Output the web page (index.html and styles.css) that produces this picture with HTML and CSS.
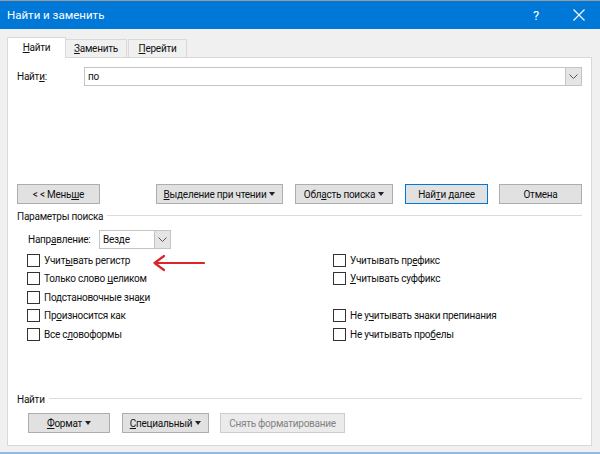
FILE: index.html
```html
<!DOCTYPE html>
<html lang="ru">
<head>
<meta charset="utf-8">
<title>Найти и заменить</title>
<link rel="stylesheet" href="styles.css">
</head>
<body>
<div class="window">
  <div class="titlebar">
    <span class="title">Найти и заменить</span>
    <span class="tb-btn help">?</span>
    <span class="tb-btn close">
      <svg width="12" height="12" viewBox="0 0 12 12"><path d="M0.5 0.5 L11.5 11.5 M11.5 0.5 L0.5 11.5" stroke="#fff" stroke-width="1.1" fill="none"/></svg>
    </span>
  </div>
  <div class="tabs">
    <div class="tab active"><span><u>Н</u>айти</span></div>
    <div class="tab"><span><u>З</u>аменить</span></div>
    <div class="tab"><span><u>П</u>ерейти</span></div>
  </div>
  <div class="panel">
    <div class="find-row">
      <label class="find-label">Найт<u>и</u>:</label>
      <div class="combo">
        <span class="combo-text">по</span>
        <span class="combo-btn"><svg width="9" height="5" viewBox="0 0 9 5"><path d="M0.5 0.5 L4.5 4.5 L8.5 0.5" stroke="#555" fill="none"/></svg></span>
      </div>
    </div>
    <div class="btn-row">
      <button class="btn w83"><span>&lt; &lt; Мень<u>ш</u>е</span></button>
      <div class="btn-group">
        <button class="btn w127"><span><u>В</u>ыделение при чтении</span><i class="caret"></i></button>
        <button class="btn w98"><span>Обл<u>а</u>сть поиска</span><i class="caret"></i></button>
        <button class="btn w83 default"><span>Най<u>т</u>и далее</span></button>
        <button class="btn w83"><span>Отмена</span></button>
      </div>
    </div>
    <div class="group-head"><span>Параметры поиска</span><i class="rule"></i></div>
    <div class="dir-row">
      <span class="dir-label">Напр<u>а</u>вление:</span>
      <div class="select">
        <span class="combo-text">Везде</span>
        <span class="combo-btn"><svg width="9" height="5" viewBox="0 0 9 5"><path d="M0.5 0.5 L4.5 4.5 L8.5 0.5" stroke="#555" fill="none"/></svg></span>
      </div>
    </div>
    <div class="options">
      <div class="opt"><i class="cb"></i><span>Учит<u>ы</u>вать регистр</span></div>
      <div class="opt"><i class="cb"></i><span>Учитывать пр<u>е</u>фикс</span></div>
      <div class="opt"><i class="cb"></i><span>Только слово <u>ц</u>еликом</span></div>
      <div class="opt"><i class="cb"></i><span><u>У</u>читывать суффикс</span></div>
      <div class="opt"><i class="cb"></i><span>Подстановочные зна<u>к</u>и</span></div>
      <div class="opt"></div>
      <div class="opt"><i class="cb"></i><span>Пр<u>о</u>износится как</span></div>
      <div class="opt"><i class="cb"></i><span>Не у<u>ч</u>итывать знаки препинания</span></div>
      <div class="opt"><i class="cb"></i><span>Все с<u>л</u>овоформы</span></div>
      <div class="opt"><i class="cb"></i><span>Не учитывать про<u>б</u>елы</span></div>
    </div>
    <div class="spacer"></div>
    <div class="group-head bottom"><span>Найти</span><i class="rule"></i></div>
    <div class="bottom-row">
      <button class="btn w82"><span><u>Ф</u>ормат</span><i class="caret"></i></button>
      <button class="btn w87"><span><u>С</u>пециальный</span><i class="caret"></i></button>
      <button class="btn w125 disabled"><span>Снять форматирование</span></button>
    </div>
    <svg class="annot-arrow" width="54" height="18" viewBox="0 0 54 18">
      <path d="M52 9 L3 9 M12 2 L2.5 9 L12 16" stroke="#d9252b" stroke-width="2.2" fill="none" stroke-linecap="round" stroke-linejoin="round"/>
    </svg>
  </div>
  <div class="bottom-edge"></div>
</div>
</body>
</html>
```

FILE: styles.css
```css
* { box-sizing: border-box; }
html, body { margin: 0; padding: 0; }
body {
  width: 600px;
  height: 454px;
  overflow: hidden;
  background: #f0f0f0;
  font-family: Roboto, "Noto Sans", sans-serif;
  font-size: 10px;
  letter-spacing: -0.25px;
  color: #111;
}
u { text-decoration: underline; text-underline-offset: 1px; }
.window { width: 600px; height: 454px; display: flex; flex-direction: column; }
.titlebar {
  height: 29px;
  border-top: 1px solid #9a9a9a;
  background: #0078d7;
  color: #fff;
  display: flex;
  align-items: center;
  padding-left: 7px;
}
.title { font-size: 11.5px; flex: 1; letter-spacing: 0; }
.tb-btn { display: flex; align-items: center; justify-content: center; }
.help { width: 14px; margin-right: 29px; font-size: 13px; }
.close { width: 14px; margin-right: 14px; }
.tabs {
  display: flex;
  align-items: flex-end;
  padding-left: 7px;
  margin-top: 7px;
  height: 21px;
  position: relative;
  z-index: 1;
  white-space: nowrap;
}
.tab {
  height: 18px;
  width: 61px;
  background: #f0f0f0;
  border: 1px solid #d9d9d9;
  border-bottom: none;
  display: flex;
  align-items: center;
  justify-content: center;
}
.tab + .tab { border-left: none; }
.tab.active {
  height: 21px;
  width: 59px;
  background: #fff;
  margin-bottom: -1px;
  padding-bottom: 2px;
}
.tab:nth-child(3) { width: 59px; margin-left: 1px; border-left: 1px solid #d9d9d9; }
.panel {
  position: relative;
  margin: 0 8px 0 7px;
  height: 389px;
  background: #fff;
  border: 1px solid #d9d9d9;
  padding: 9px 9px 12px 9px;
  display: flex;
  flex-direction: column;
  white-space: nowrap;
}
.find-row { display: flex; align-items: center; height: 19px; }
.find-label { width: 67px; }
.combo, .select {
  display: flex;
  align-items: center;
  height: 19px;
  border: 1px solid #c4c4c4;
  background: #fff;
}
.combo { flex: 1; }
.combo-text { flex: 1; padding-left: 3px; }
.combo-btn {
  width: 16px;
  height: 17px;
  background: #e5e5e5;
  border-left: 1px solid #c4c4c4;
  display: flex;
  align-items: center;
  justify-content: center;
}
.btn-row { display: flex; margin-top: 98px; }
.btn-group { display: flex; gap: 12px; margin-left: auto; }
.btn-group .btn:last-child { margin-left: -1px; }
.btn {
  height: 20px;
  background: #e1e1e1;
  border: 1px solid #adadad;
  font: inherit;
  letter-spacing: inherit;
  color: #111;
  padding: 0;
  display: flex;
  align-items: center;
  justify-content: center;
  white-space: nowrap;
}
.btn.default { border-color: #0078d7; }
.btn.disabled { background: #ebebeb; border-color: #cdcdcd; color: #838383; }
.w82 { width: 82px; }
.w83 { width: 83px; }
.w87 { width: 87px; }
.w98 { width: 98px; }
.w125 { width: 125px; }
.w127 { width: 127px; }
.caret {
  display: inline-block;
  width: 0; height: 0;
  border-left: 3.5px solid transparent;
  border-right: 3.5px solid transparent;
  border-top: 4px solid #222;
  margin-left: 3px;
}
.group-head { display: flex; align-items: center; margin-top: 5px; height: 14px; }
.group-head .rule { flex: 1; height: 1px; background: #dcdcdc; margin-left: 4px; margin-top: -1px; }
.dir-row { display: flex; align-items: center; margin-top: 7px; padding-left: 11px; }
.dir-label { width: 71px; }
.select { width: 72px; }
.options {
  display: grid;
  grid-template-columns: 306px 1fr;
  grid-auto-rows: 18.5px;
  padding-left: 10px;
  margin-top: 2px;
}
.opt { display: flex; align-items: center; }
.cb {
  width: 13px; height: 13px;
  border: 1px solid #333;
  background: #fff;
  margin-right: 4px;
  flex: none;
}
.spacer { flex: 1; }
.group-head.bottom { margin-top: 0; }
.bottom-row { display: flex; gap: 12px; padding-left: 11px; margin-top: 7px; }
.bottom-row .btn:nth-child(3) { margin-left: -1px; }
.annot-arrow { position: absolute; left: 144px; top: 196px; }
.bottom-edge { margin-top: 6px; height: 2px; background: #8cbce6; }
```
